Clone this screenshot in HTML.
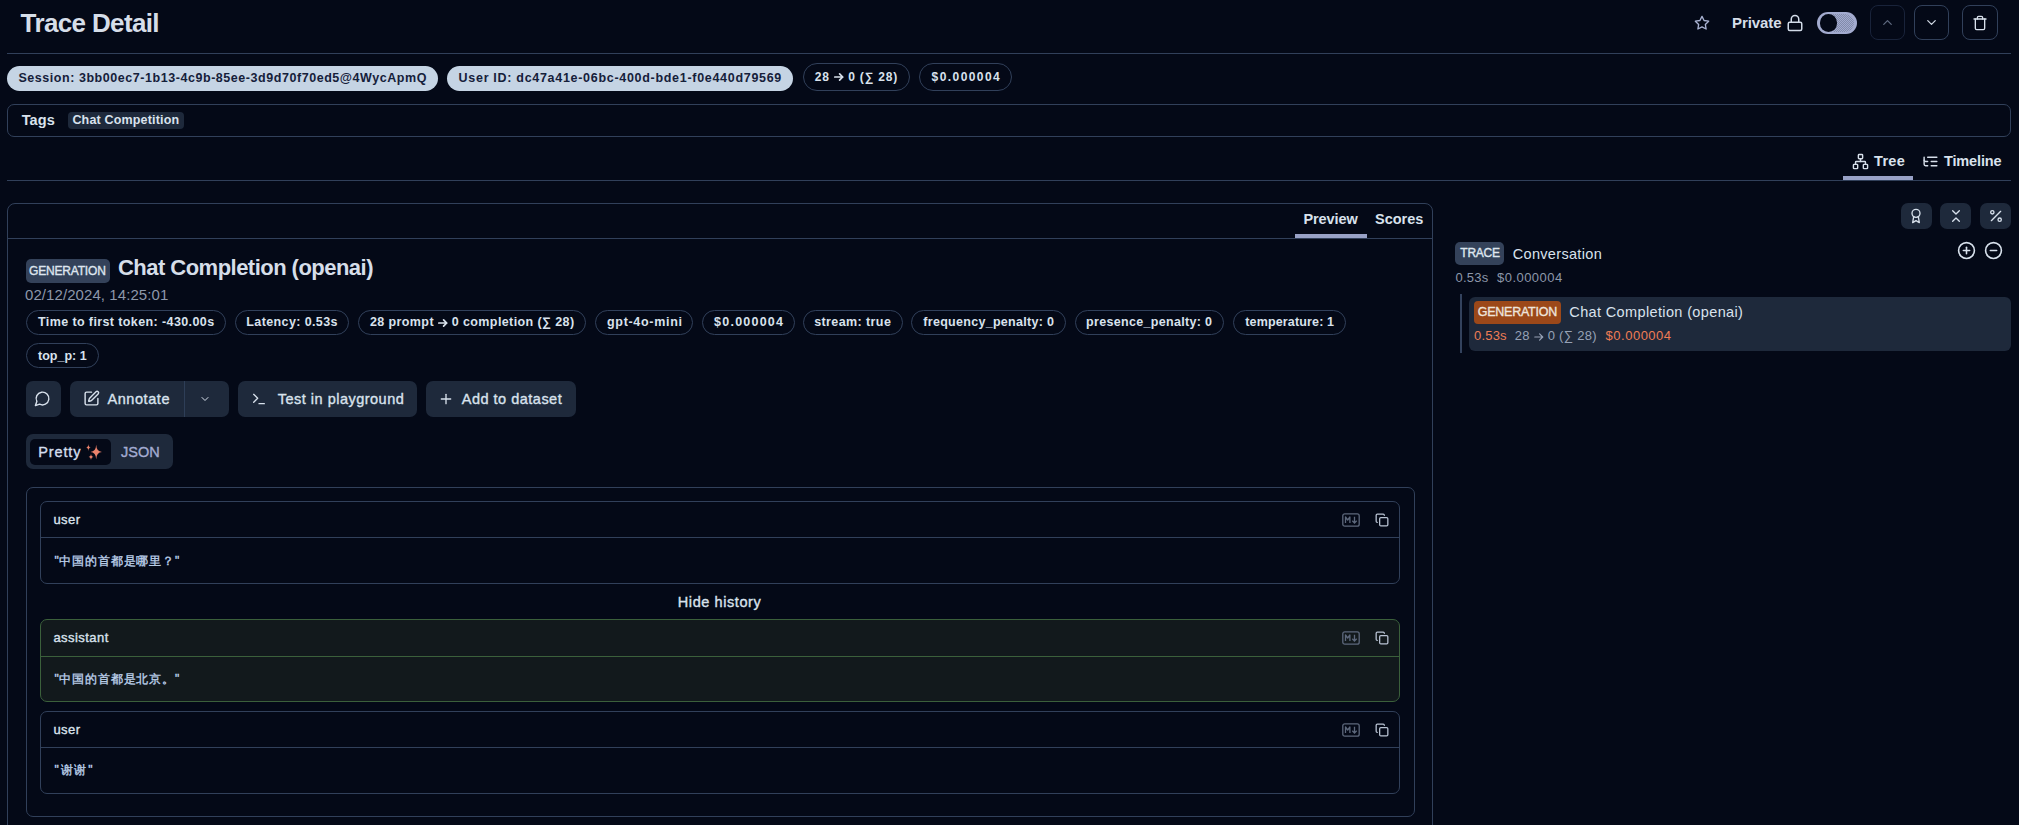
<!DOCTYPE html>
<html><head><meta charset="utf-8"><style>
*{box-sizing:border-box;margin:0;padding:0}
html,body{width:2019px;height:825px;overflow:hidden;background:#040917;font-family:"Liberation Sans",sans-serif;color:#d9e2ed}
.a{position:absolute}
.t{position:absolute;line-height:1;white-space:pre}
.hr{position:absolute;height:1px;background:#31405a}
svg{position:absolute;overflow:visible}
svg.i{position:static;display:inline-block}
</style></head><body>
<div class="t" style="left:20.60px;top:10.00px;font-size:26px;font-weight:700;letter-spacing:-0.636px;color:#d6dee9;">Trace Detail</div>
<svg style="left:1694px;top:14.5px" width="16" height="16" viewBox="0 0 24 24" fill="none" stroke="#a9b2d2" stroke-width="2" stroke-linecap="round" stroke-linejoin="round"><polygon points="12 2 15.09 8.26 22 9.27 17 14.14 18.18 21.02 12 17.77 5.82 21.02 7 14.14 2 9.27 8.91 8.26 12 2"/></svg>
<div class="t" style="left:1732.00px;top:15.20px;font-size:15px;font-weight:700;letter-spacing:-0.083px;color:#d6dee9;">Private</div>
<svg style="left:1786.3px;top:14.2px" width="18" height="18" viewBox="0 0 24 24" fill="none" stroke="#d2dbe8" stroke-width="2" stroke-linecap="round" stroke-linejoin="round"><rect x="3" y="11" width="18" height="11" rx="2"/><path d="M7 11V7a5 5 0 0 1 10 0v4"/></svg>
<div class="a" style="left:1817px;top:12px;width:40px;height:22px;border-radius:11px;background:#a3abcf"></div>
<div class="a" style="left:1833px;top:14px;width:21px;height:18px;border-radius:0 9px 9px 0;background:repeating-conic-gradient(#a3abcf 0 25%,#7f88a6 0 50%) 0 0/2px 2px;opacity:.9"></div>
<div class="a" style="left:1819.5px;top:14px;width:17.5px;height:17.5px;border-radius:50%;background:#040917"></div>
<div class="a" style="left:1870px;top:5px;width:35px;height:35px;border:1px solid #19233a;border-radius:8px"></div>
<svg style="left:1880px;top:15px" width="15" height="15" viewBox="0 0 24 24" fill="none" stroke="#5f6a80" stroke-width="2" stroke-linecap="round" stroke-linejoin="round"><path d="m18 15-6-6-6 6"/></svg>
<div class="a" style="left:1914px;top:5px;width:35px;height:35px;border:1px solid #31405a;border-radius:8px"></div>
<svg style="left:1924px;top:15px" width="15" height="15" viewBox="0 0 24 24" fill="none" stroke="#d0d8e4" stroke-width="2" stroke-linecap="round" stroke-linejoin="round"><path d="m6 9 6 6 6-6"/></svg>
<div class="a" style="left:1962px;top:5px;width:36px;height:35px;border:1px solid #31405a;border-radius:8px"></div>
<svg style="left:1972px;top:15px" width="16" height="16" viewBox="0 0 24 24" fill="none" stroke="#d8e1ec" stroke-width="2" stroke-linecap="round" stroke-linejoin="round"><path d="M3 6h18"/><path d="M19 6v14c0 1-1 2-2 2H7c-1 0-2-1-2-2V6"/><path d="M8 6V4c0-1 1-2 2-2h4c1 0 2 1 2 2v2"/></svg>
<div class="hr" style="left:7px;top:53px;width:2004px"></div>
<div class="a" style="left:7px;top:66px;width:431px;height:25px;background:#c5d4e4;border-radius:999px"></div>
<div class="t" style="left:18.40px;top:72.00px;font-size:12.5px;font-weight:700;letter-spacing:0.551px;color:#15203a;">Session: 3bb00ec7-1b13-4c9b-85ee-3d9d70f70ed5@4WycApmQ</div>
<div class="a" style="left:447px;top:66px;width:346px;height:25px;background:#c5d4e4;border-radius:999px"></div>
<div class="t" style="left:458.60px;top:72.00px;font-size:12.5px;font-weight:700;letter-spacing:0.702px;color:#15203a;">User ID: dc47a41e-06bc-400d-bde1-f0e440d79569</div>
<div class="a" style="left:803px;top:63px;width:107px;height:28px;border:1px solid #31405a;border-radius:999px"></div>
<div class="t" style="left:814.70px;top:70.60px;font-size:12px;font-weight:700;letter-spacing:0.855px;">28 <svg class="i" width="10" height="8" viewBox="0 0 10 8" style="vertical-align:-0.5px"><path d="M0.8 4h8M5.6 0.9 8.7 4 5.6 7.1" stroke="currentColor" stroke-width="1.7" fill="none" stroke-linecap="round" stroke-linejoin="round"/></svg> 0 (∑ 28)</div>
<div class="a" style="left:919px;top:63px;width:93px;height:28px;border:1px solid #31405a;border-radius:999px"></div>
<div class="t" style="left:931.60px;top:70.60px;font-size:12px;font-weight:700;letter-spacing:1.425px;">$0.000004</div>
<div class="a" style="left:7px;top:104px;width:2004px;height:33px;border:1px solid #31405a;border-radius:7px"></div>
<div class="t" style="left:21.70px;top:112.70px;font-size:14.5px;font-weight:700;letter-spacing:0.100px;">Tags</div>
<div class="a" style="left:68px;top:112px;width:116px;height:17px;background:#1e293b;border-radius:4px"></div>
<div class="t" style="left:72.40px;top:114.00px;font-size:12.5px;font-weight:700;letter-spacing:0.173px;">Chat Competition</div>
<div class="hr" style="left:7px;top:180px;width:2004px"></div>
<div class="a" style="left:1843px;top:176px;width:70px;height:4px;background:#98a1c6"></div>
<svg style="left:1852px;top:152.5px" width="17" height="17" viewBox="0 0 24 24" fill="none" stroke="#d6dee9" stroke-width="2" stroke-linecap="round" stroke-linejoin="round"><rect x="16" y="16" width="6" height="6" rx="1"/><rect x="2" y="16" width="6" height="6" rx="1"/><rect x="9" y="2" width="6" height="6" rx="1"/><path d="M5 16v-3a1 1 0 0 1 1-1h12a1 1 0 0 1 1 1v3"/><path d="M12 12V8"/></svg>
<div class="t" style="left:1874.00px;top:153.70px;font-size:14.5px;font-weight:700;letter-spacing:0.333px;">Tree</div>
<svg style="left:1922px;top:152.5px" width="17" height="17" viewBox="0 0 24 24" fill="none" stroke="#d6dee9" stroke-width="2" stroke-linecap="round" stroke-linejoin="round"><path d="M21 12h-8"/><path d="M21 6H8"/><path d="M21 18h-8"/><path d="M3 6v4c0 1.1.9 2 2 2h3"/><path d="M3 10v6c0 1.1.9 2 2 2h3"/></svg>
<div class="t" style="left:1944.00px;top:153.70px;font-size:14.5px;font-weight:700;letter-spacing:-0.143px;">Timeline</div>
<div class="a" style="left:7px;top:203px;width:1426px;height:797px;border:1px solid #31405a;border-radius:8px"></div>
<div class="hr" style="left:8px;top:238px;width:1424px"></div>
<div class="a" style="left:1295px;top:234px;width:72px;height:4px;background:#98a1c6"></div>
<div class="t" style="left:1303.40px;top:212.00px;font-size:14.5px;font-weight:700;letter-spacing:-0.067px;">Preview</div>
<div class="t" style="left:1375.00px;top:212.00px;font-size:14.5px;font-weight:700;letter-spacing:0.000px;">Scores</div>
<div class="a" style="left:26px;top:259px;width:84px;height:24px;background:#34425a;border-radius:5px"></div>
<div class="t" style="left:29.00px;top:265.10px;font-size:12px;font-weight:400;letter-spacing:-0.178px;color:#dfe6ef;-webkit-text-stroke:0.35px currentColor;">GENERATION</div>
<div class="t" style="left:118.00px;top:257.10px;font-size:22px;font-weight:700;letter-spacing:-0.530px;color:#d6dee9;">Chat Completion (openai)</div>
<div class="t" style="left:25.00px;top:287.20px;font-size:15px;font-weight:400;letter-spacing:0.079px;color:#8d97aa;">02/12/2024, 14:25:01</div>
<div class="a" style="left:26px;top:310px;width:200px;height:25px;border:1px solid #31405a;border-radius:999px"></div>
<div class="t" style="left:38.00px;top:316.40px;font-size:12.5px;font-weight:700;letter-spacing:0.393px;">Time to first token: -430.00s</div>
<div class="a" style="left:235px;top:310px;width:114px;height:25px;border:1px solid #31405a;border-radius:999px"></div>
<div class="t" style="left:246.30px;top:316.40px;font-size:12.5px;font-weight:700;letter-spacing:0.385px;">Latency: 0.53s</div>
<div class="a" style="left:358px;top:310px;width:228px;height:25px;border:1px solid #31405a;border-radius:999px"></div>
<div class="t" style="left:369.90px;top:316.40px;font-size:12.5px;font-weight:700;letter-spacing:0.403px;">28 prompt <svg class="i" width="10" height="8" viewBox="0 0 10 8" style="vertical-align:-0.5px"><path d="M0.8 4h8M5.6 0.9 8.7 4 5.6 7.1" stroke="currentColor" stroke-width="1.7" fill="none" stroke-linecap="round" stroke-linejoin="round"/></svg> 0 completion (∑ 28)</div>
<div class="a" style="left:595px;top:310px;width:98px;height:25px;border:1px solid #31405a;border-radius:999px"></div>
<div class="t" style="left:607.00px;top:316.40px;font-size:12.5px;font-weight:700;letter-spacing:0.690px;">gpt-4o-mini</div>
<div class="a" style="left:702px;top:310px;width:93px;height:25px;border:1px solid #31405a;border-radius:999px"></div>
<div class="t" style="left:714.10px;top:316.40px;font-size:12.5px;font-weight:700;letter-spacing:1.225px;">$0.000004</div>
<div class="a" style="left:803px;top:310px;width:100px;height:25px;border:1px solid #31405a;border-radius:999px"></div>
<div class="t" style="left:814.20px;top:316.40px;font-size:12.5px;font-weight:700;letter-spacing:0.400px;">stream: true</div>
<div class="a" style="left:911px;top:310px;width:155px;height:25px;border:1px solid #31405a;border-radius:999px"></div>
<div class="t" style="left:923.30px;top:316.40px;font-size:12.5px;font-weight:700;letter-spacing:0.289px;">frequency_penalty: 0</div>
<div class="a" style="left:1075px;top:310px;width:149px;height:25px;border:1px solid #31405a;border-radius:999px"></div>
<div class="t" style="left:1086.00px;top:316.40px;font-size:12.5px;font-weight:700;letter-spacing:0.322px;">presence_penalty: 0</div>
<div class="a" style="left:1233px;top:310px;width:113px;height:25px;border:1px solid #31405a;border-radius:999px"></div>
<div class="t" style="left:1245.30px;top:316.40px;font-size:12.5px;font-weight:700;letter-spacing:0.146px;">temperature: 1</div>
<div class="a" style="left:26px;top:343px;width:73px;height:25px;border:1px solid #31405a;border-radius:999px"></div>
<div class="t" style="left:38.00px;top:350.00px;font-size:12.5px;font-weight:700;letter-spacing:0.000px;">top_p: 1</div>
<div class="a" style="left:26px;top:381px;width:35px;height:36px;background:#1e293b;border-radius:7px"></div>
<svg style="left:33.6px;top:390.3px" width="17" height="17" viewBox="0 0 24 24" fill="none" stroke="#d8e1ec" stroke-width="2" stroke-linecap="round" stroke-linejoin="round"><path d="M7.9 20A9 9 0 1 0 4 16.1L2 22Z"/></svg>
<div class="a" style="left:70px;top:381px;width:159px;height:36px;background:#1e293b;border-radius:7px"></div>
<div class="a" style="left:183.5px;top:381px;width:1.5px;height:36px;background:#2e3e57"></div>
<svg style="left:83.3px;top:390.2px" width="17" height="17" viewBox="0 0 24 24" fill="none" stroke="#d8e1ec" stroke-width="2" stroke-linecap="round" stroke-linejoin="round"><path d="M12 3H5a2 2 0 0 0-2 2v14a2 2 0 0 0 2 2h14a2 2 0 0 0 2-2v-7"/><path d="M18.375 2.625a1 1 0 0 1 3 3l-9.013 9.014a2 2 0 0 1-.853.505l-2.873.84a.5.5 0 0 1-.62-.62l.84-2.873a2 2 0 0 1 .506-.852z"/></svg>
<div class="t" style="left:107.40px;top:391.90px;font-size:14.5px;font-weight:400;letter-spacing:0.586px;-webkit-text-stroke:0.35px currentColor;">Annotate</div>
<svg style="left:198.5px;top:393px" width="12" height="12" viewBox="0 0 24 24" fill="none" stroke="#d8e1ec" stroke-width="2" stroke-linecap="round" stroke-linejoin="round"><path d="m6 9 6 6 6-6"/></svg>
<div class="a" style="left:238px;top:381px;width:179px;height:36px;background:#1e293b;border-radius:7px"></div>
<svg style="left:250.8px;top:390.5px" width="16" height="16" viewBox="0 0 24 24" fill="none" stroke="#d8e1ec" stroke-width="2" stroke-linecap="round" stroke-linejoin="round"><polyline points="4 17 10 11 4 5"/><line x1="12" x2="20" y1="19" y2="19"/></svg>
<div class="t" style="left:277.80px;top:391.90px;font-size:14.5px;font-weight:400;letter-spacing:0.488px;-webkit-text-stroke:0.35px currentColor;">Test in playground</div>
<div class="a" style="left:426px;top:381px;width:150px;height:36px;background:#1e293b;border-radius:7px"></div>
<svg style="left:437.5px;top:390.5px" width="16" height="16" viewBox="0 0 24 24" fill="none" stroke="#d8e1ec" stroke-width="2" stroke-linecap="round" stroke-linejoin="round"><path d="M5 12h14"/><path d="M12 5v14"/></svg>
<div class="t" style="left:461.80px;top:391.90px;font-size:14.5px;font-weight:400;letter-spacing:0.492px;-webkit-text-stroke:0.35px currentColor;">Add to dataset</div>
<div class="a" style="left:26px;top:434px;width:147px;height:35px;background:#1e293b;border-radius:7px"></div>
<div class="a" style="left:30px;top:439px;width:81px;height:26px;background:#040917;border-radius:5px"></div>
<div class="t" style="left:38.30px;top:444.80px;font-size:14.5px;font-weight:400;letter-spacing:0.860px;color:#d3deed;-webkit-text-stroke:0.35px currentColor;">Pretty</div>
<svg style="left:80px;top:440px" width="30" height="25" viewBox="0 0 30 25"><path d="M16.20 4.80 Q16.49 11.64 22.00 12.00 Q16.49 12.36 16.20 19.20 Q15.91 12.36 10.40 12.00 Q15.91 11.64 16.20 4.80Z" fill="#ec836c"/><path d="M8.40 4.00 Q8.52 7.42 10.80 7.60 Q8.52 7.78 8.40 11.20 Q8.28 7.78 6.00 7.60 Q8.28 7.42 8.40 4.00Z" fill="#ec836c"/><path d="M11.00 13.60 Q11.12 16.73 13.40 16.90 Q11.12 17.06 11.00 20.20 Q10.88 17.06 8.60 16.90 Q10.88 16.73 11.00 13.60Z" fill="#ec836c"/></svg>
<div class="t" style="left:120.90px;top:444.80px;font-size:14.5px;font-weight:400;letter-spacing:0.033px;color:#a3acd2;-webkit-text-stroke:0.35px currentColor;">JSON</div>
<div class="a" style="left:26px;top:487px;width:1389px;height:330px;border:1px solid #31405a;border-radius:7px"></div>
<div class="a" style="left:40px;top:501px;width:1360px;height:83px;border:1px solid #31405a;border-radius:7px"></div>
<div class="a" style="left:41px;top:537px;width:1358px;height:1px;background:#31405a"></div>
<div class="t" style="left:53.40px;top:513.00px;font-size:13px;font-weight:400;letter-spacing:0.467px;-webkit-text-stroke:0.35px currentColor;">user</div>
<svg style="left:1342px;top:513px" width="18" height="14" viewBox="0 0 18 14" fill="none" stroke="#5d687c" stroke-width="1.3"><rect x="0.8" y="0.8" width="16.4" height="12.4" rx="2"/><path d="M3.5 10V4l2.2 3 2.2-3v6" stroke-linejoin="round"/><path d="M12.5 3.8v6M10.3 7.8l2.2 2.2 2.2-2.2"/></svg>
<svg style="left:1374.5px;top:513px" width="14" height="14" viewBox="0 0 24 24" fill="none" stroke="#b9c3d3" stroke-width="2.2" stroke-linecap="round" stroke-linejoin="round"><rect width="14" height="14" x="8" y="8" rx="2" ry="2"/><path d="M4 16c-1.1 0-2-.9-2-2V4c0-1.1.9-2 2-2h10c1.1 0 2 .9 2 2"/></svg>
<div class="t" style="left:54.40px;top:555.00px;font-size:12px;font-weight:400;letter-spacing:0.830px;color:#bcd0ea;-webkit-text-stroke:0.35px currentColor;">"中国的首都是哪里？"</div>
<div class="t" style="left:677.80px;top:594.80px;font-size:14.5px;font-weight:400;letter-spacing:0.582px;-webkit-text-stroke:0.35px currentColor;">Hide history</div>
<div class="a" style="left:40px;top:619px;width:1360px;height:83px;border:1px solid #3b603b;background:#12191c;border-radius:7px"></div>
<div class="a" style="left:41px;top:656px;width:1358px;height:1px;background:#3b603b"></div>
<div class="t" style="left:53.40px;top:631.00px;font-size:13px;font-weight:400;letter-spacing:0.450px;-webkit-text-stroke:0.35px currentColor;">assistant</div>
<svg style="left:1342px;top:631px" width="18" height="14" viewBox="0 0 18 14" fill="none" stroke="#5d687c" stroke-width="1.3"><rect x="0.8" y="0.8" width="16.4" height="12.4" rx="2"/><path d="M3.5 10V4l2.2 3 2.2-3v6" stroke-linejoin="round"/><path d="M12.5 3.8v6M10.3 7.8l2.2 2.2 2.2-2.2"/></svg>
<svg style="left:1374.5px;top:631px" width="14" height="14" viewBox="0 0 24 24" fill="none" stroke="#b9c3d3" stroke-width="2.2" stroke-linecap="round" stroke-linejoin="round"><rect width="14" height="14" x="8" y="8" rx="2" ry="2"/><path d="M4 16c-1.1 0-2-.9-2-2V4c0-1.1.9-2 2-2h10c1.1 0 2 .9 2 2"/></svg>
<div class="t" style="left:54.40px;top:672.80px;font-size:12px;font-weight:400;letter-spacing:0.830px;color:#bcd0ea;-webkit-text-stroke:0.35px currentColor;">"中国的首都是北京。"</div>
<div class="a" style="left:40px;top:711px;width:1360px;height:83px;border:1px solid #31405a;border-radius:7px"></div>
<div class="a" style="left:41px;top:747px;width:1358px;height:1px;background:#31405a"></div>
<div class="t" style="left:53.40px;top:723.00px;font-size:13px;font-weight:400;letter-spacing:0.467px;-webkit-text-stroke:0.35px currentColor;">user</div>
<svg style="left:1342px;top:723px" width="18" height="14" viewBox="0 0 18 14" fill="none" stroke="#5d687c" stroke-width="1.3"><rect x="0.8" y="0.8" width="16.4" height="12.4" rx="2"/><path d="M3.5 10V4l2.2 3 2.2-3v6" stroke-linejoin="round"/><path d="M12.5 3.8v6M10.3 7.8l2.2 2.2 2.2-2.2"/></svg>
<svg style="left:1374.5px;top:723px" width="14" height="14" viewBox="0 0 24 24" fill="none" stroke="#b9c3d3" stroke-width="2.2" stroke-linecap="round" stroke-linejoin="round"><rect width="14" height="14" x="8" y="8" rx="2" ry="2"/><path d="M4 16c-1.1 0-2-.9-2-2V4c0-1.1.9-2 2-2h10c1.1 0 2 .9 2 2"/></svg>
<div class="t" style="left:54.40px;top:764.30px;font-size:12px;font-weight:400;letter-spacing:1.867px;color:#bcd0ea;-webkit-text-stroke:0.35px currentColor;">"谢谢"</div>
<div class="a" style="left:1901px;top:203px;width:31px;height:26px;background:#1e293b;border-radius:7px"></div>
<div class="a" style="left:1940px;top:203px;width:31px;height:26px;background:#1e293b;border-radius:7px"></div>
<div class="a" style="left:1980px;top:203px;width:31px;height:26px;background:#1e293b;border-radius:7px"></div>
<svg style="left:1908px;top:207.5px" width="16" height="16" viewBox="0 0 24 24" fill="none" stroke="#d8e1ec" stroke-width="2" stroke-linecap="round" stroke-linejoin="round"><circle cx="12" cy="8" r="6"/><path d="M15.477 12.89 17 22l-5-3-5 3 1.523-9.11"/></svg>
<svg style="left:1947.5px;top:207.5px" width="16" height="16" viewBox="0 0 24 24" fill="none" stroke="#d8e1ec" stroke-width="2" stroke-linecap="round" stroke-linejoin="round"><path d="m7 20 5-5 5 5"/><path d="m7 4 5 5 5-5"/></svg>
<svg style="left:1987.5px;top:207.5px" width="16" height="16" viewBox="0 0 24 24" fill="none" stroke="#d8e1ec" stroke-width="2" stroke-linecap="round" stroke-linejoin="round"><line x1="19" x2="5" y1="5" y2="19"/><circle cx="6.5" cy="6.5" r="2.5"/><circle cx="17.5" cy="17.5" r="2.5"/></svg>
<div class="a" style="left:1455px;top:242px;width:49px;height:23px;background:#34425a;border-radius:5px"></div>
<div class="t" style="left:1460.30px;top:247.20px;font-size:12px;font-weight:400;letter-spacing:-0.225px;color:#dfe6ef;-webkit-text-stroke:0.35px currentColor;">TRACE</div>
<div class="t" style="left:1512.70px;top:246.50px;font-size:14.5px;font-weight:400;letter-spacing:0.327px;">Conversation</div>
<svg style="left:1957px;top:241px" width="19" height="19" viewBox="0 0 24 24" fill="none" stroke="#d8e1ec" stroke-width="2" stroke-linecap="round" stroke-linejoin="round"><circle cx="12" cy="12" r="10"/><path d="M8 12h8"/><path d="M12 8v8"/></svg>
<svg style="left:1983.5px;top:241px" width="19" height="19" viewBox="0 0 24 24" fill="none" stroke="#d8e1ec" stroke-width="2" stroke-linecap="round" stroke-linejoin="round"><circle cx="12" cy="12" r="10"/><path d="M8 12h8"/></svg>
<div class="t" style="left:1455.50px;top:271.00px;font-size:13px;font-weight:400;letter-spacing:0.250px;color:#8d97aa;">0.53s</div>
<div class="t" style="left:1497.00px;top:271.00px;font-size:13px;font-weight:400;letter-spacing:0.463px;color:#8d97aa;">$0.000004</div>
<div class="a" style="left:1460px;top:294px;width:1.5px;height:59px;background:#33425d"></div>
<div class="a" style="left:1469px;top:297px;width:542px;height:54px;background:#1e293b;border-radius:6px"></div>
<div class="a" style="left:1474px;top:301px;width:87px;height:23px;background:#9c4819;border-radius:4px"></div>
<div class="t" style="left:1477.80px;top:306.00px;font-size:12.5px;font-weight:400;letter-spacing:-0.256px;color:#eee4dc;-webkit-text-stroke:0.35px currentColor;">GENERATION</div>
<div class="t" style="left:1569.30px;top:304.60px;font-size:14.5px;font-weight:400;letter-spacing:0.365px;">Chat Completion (openai)</div>
<div class="t" style="left:1474.00px;top:329.40px;font-size:13px;font-weight:400;letter-spacing:0.200px;color:#ee7d55;">0.53s</div>
<div class="t" style="left:1514.80px;top:329.40px;font-size:13px;font-weight:400;letter-spacing:0.291px;color:#97a2b6;">28 <svg class="i" width="10" height="8" viewBox="0 0 10 8" style="vertical-align:-0.5px"><path d="M0.8 4h8M5.6 0.9 8.7 4 5.6 7.1" stroke="currentColor" stroke-width="1.2" fill="none" stroke-linecap="round" stroke-linejoin="round"/></svg> 0 (∑ 28)</div>
<div class="t" style="left:1605.60px;top:329.40px;font-size:13px;font-weight:400;letter-spacing:0.500px;color:#ee7d55;">$0.000004</div>
</body></html>
